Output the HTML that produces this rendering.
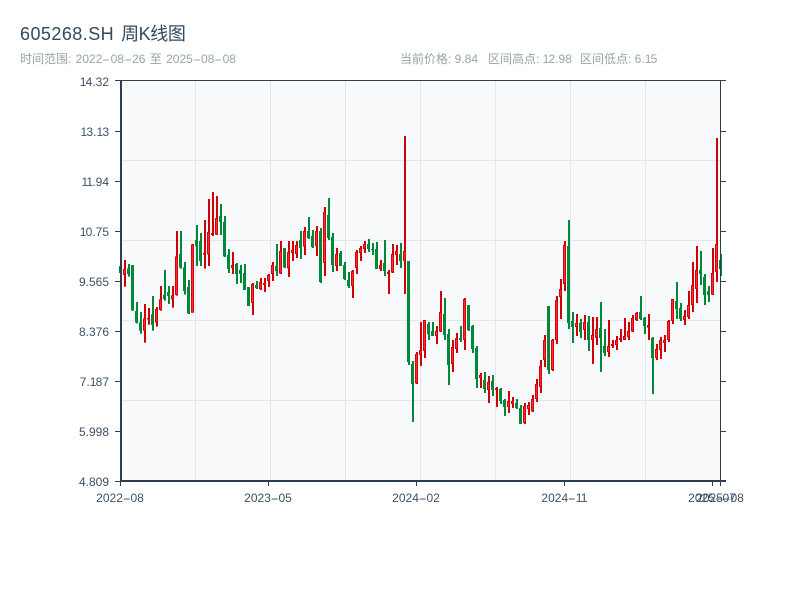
<!DOCTYPE html>
<html lang="zh"><head><meta charset="utf-8"><title>605268.SH 周K线图</title>
<style>
html,body{margin:0;padding:0;background:#fff}
body{width:800px;height:600px;position:relative;overflow:hidden;font-family:"Liberation Sans","Noto Sans CJK SC",sans-serif}
.t{position:absolute;white-space:nowrap}
#title{left:20px;top:22px;font-size:18px;line-height:24px;color:#34495e}
#title b{font-weight:400;letter-spacing:.45px;word-spacing:1.5px}
#title i{font-style:normal;letter-spacing:-.4px}
.s{top:51px;font-size:12px;line-height:16px;color:#95a5a6}
.y{position:absolute;right:691px;font-size:12px;line-height:14px;color:#3d5166;white-space:nowrap}
.x{position:absolute;top:491px;width:60px;text-align:center;font-size:12px;line-height:14px;color:#3d5166;white-space:nowrap}
.d{display:inline-block;width:7.6px;text-align:center;transform:scaleX(2)}
.s .d{width:8.2px}
.n{letter-spacing:-.8px}
svg{position:absolute;left:0;top:0}
</style></head><body>
<div class="t" id="title"><b>605268.SH </b><i>周K线图</i></div>
<div class="t s" style="left:20px;word-spacing:1px">时间范围: 2022<span class="d">-</span>08<span class="d">-</span>26 至 2025<span class="d">-</span>08<span class="d">-</span>08</div>
<div class="t s" style="left:400px">当前价格: 9.84</div>
<div class="t s" style="left:488px">区间高点: <span class="n">1</span>2.98</div>
<div class="t s" style="left:580px">区间低点: 6.<span class="n">1</span>5</div>
<svg width="800" height="600" viewBox="0 0 800 600">
<rect x="121" y="81" width="600" height="400" fill="#f7f9fb"/>
<path d="M195.5 81V481M270.5 81V481M345.5 81V481M420.5 81V481M495.5 81V481M570.5 81V481M645.5 81V481M121 160.5H721M121 240.5H721M121 320.5H721M121 400.5H721" stroke="#e3e6eb" stroke-width="1" fill="none"/>

<g transform="translate(120.67 180) scale(4 .33333)" fill="none" shape-rendering="crispEdges">
<path transform="translate(.0825 0)" stroke="#00873a" stroke-width=".5" d="M0 246V288M2 252V290M3 255V392M4 366V430M5 396V461M8 348V452M11 270V362M12 318V372M15 153V266M16 246V344M17 300V402M19 135V258M20 159V258M25 72V165M26 108V231M27 207V279M29 249V312M30 255V309M31 252V330M32 321V378M34 303V327M39 192V288M41 204V264M45 153V237M47 111V177M48 150V204M50 144V309M52 54V180M53 159V276M55 213V258M56 246V300M57 276V324M62 177V216M63 189V225M64 186V267M66 180V288M70 189V264"/>
<path transform="translate(-.0425 0)" stroke="#00873a" stroke-width=".75" d="M0 258V279M2 265V282M3 255V392M4 393V428M5 427V452M8 403V435M11 345V357M12 336V348M15 222V263M16 262V333M17 321V400M19 180V198M20 183V243M25 108V126M26 126V229M27 225V267M29 252V282M30 270V282M31 279V330M32 321V378M34 315V324M39 258V273M41 204V262M45 180V204M47 153V174M48 168V201M50 153V306M52 105V174M53 171V255M55 219V258M56 255V297M57 300V318M62 192V207M63 207V210M64 207V267M66 249V273M70 222V243"/>
<path transform="translate(.0825 0)" stroke="#d00008" stroke-width=".5" d="M1 240V320M6 372V488M7 384V434M9 381V440M10 318V392M13 318V383M14 153V347M18 192V398M21 120V266M22 57V258M23 36V168M24 48V165M28 216V282M33 309V405M35 294V330M36 294V336M37 282V321M38 246V303M40 183V282M42 183V291M43 183V243M44 183V234M46 141V225M49 138V228M51 81V288M54 204V273M58 270V354M59 210V282M60 198V243M61 183V219M65 240V273M67 270V342M68 192V279M69 195V255M71 -132V342"/>
<path transform="translate(-.0425 0)" stroke="#d00008" stroke-width=".75" d="M1 267V285M6 415V452M7 414V418M9 387V428M10 358V390M13 346V358M14 229V345M18 193V398M21 219V224M22 156V223M23 159V165M24 114V164M28 255V264M33 312V369M35 306V327M36 309V315M37 285V303M38 255V282M40 213V281M42 216V265M43 210V219M44 195V222M46 153V200M49 153V198M51 96V249M54 222V258M58 273V318M59 216V264M60 204V219M61 192V207M65 255V267M67 276V282M68 222V278M69 213V225M71 213V243"/>
<path transform="translate(-.0425 0)" stroke="#ff2a30" stroke-width=".3" d="M1 270V282M6 418V449M9 390V425M10 361V387M13 349V355M14 232V342M18 196V395M22 159V220M24 117V161M28 258V261M33 315V366M35 309V324M37 288V300M38 258V279M40 216V278M42 219V262M43 213V216M44 198V219M46 156V197M49 156V195M51 99V246M54 225V255M58 276V315M59 219V261M60 207V216M61 195V204M65 258V264M68 225V275M69 216V222M71 216V240"/>
</g>

<g transform="translate(120.67 250) scale(4 .33333)" fill="none" shape-rendering="crispEdges">
<path transform="translate(.0825 0)" stroke="#00873a" stroke-width=".5" d="M72 33V345M73 333V516M77 216V270M78 216V258M81 144V270M82 237V405M85 228V276M87 165V243M88 225V309M89 288V414M91 366V429M93 375V438M95 414V462M96 447V498M99 447V477M100 465V522M107 168V372"/>
<path transform="translate(-.0425 0)" stroke="#00873a" stroke-width=".75" d="M72 33V336M73 342V402M77 222V252M78 243V258M81 192V255M82 252V345M85 264V270M87 165V240M88 228V297M89 294V387M91 390V417M93 393V420M95 417V453M96 450V471M99 459V474M100 474V522M107 168V360"/>
<path transform="translate(.0825 0)" stroke="#d00008" stroke-width=".5" d="M74 306V402M75 216V348M76 210V324M79 228V282M80 123V246M83 270V366M84 249V309M86 144V300M90 369V414M92 378V459M94 411V471M97 423V489M98 441V474M101 459V522M102 456V495M103 435V486M104 387V456M105 330V429M106 255V351M108 267V363M109 138V282"/>
<path transform="translate(-.0425 0)" stroke="#d00008" stroke-width=".75" d="M74 312V400M75 300V315M76 210V303M79 243V258M80 186V245M83 291V342M84 264V297M86 147V270M90 375V384M92 396V420M94 414V420M97 453V471M98 453V462M101 468V519M102 465V477M103 447V484M104 402V447M105 348V411M106 270V330M108 270V360M109 150V270"/>
<path transform="translate(-.0425 0)" stroke="#ff2a30" stroke-width=".3" d="M74 315V397M75 303V312M76 213V300M79 246V255M80 189V242M83 294V339M84 267V294M86 150V267M90 378V381M92 399V417M97 456V468M98 456V459M101 471V516M102 468V474M103 450V481M104 405V444M105 351V408M106 273V327M108 273V357M109 153V267"/>
</g>

<g transform="translate(120.67 210) scale(4 .33333)" fill="none" shape-rendering="crispEdges">
<path transform="translate(.0825 0)" stroke="#00873a" stroke-width=".5" d="M112 30V357M113 306V399M115 327V384M117 318V423M120 276V486M121 357V438M130 258V330M131 321V372M133 381V552M139 216V327M140 279V333M145 123V225M146 192V285M147 228V276M150 132V198"/>
<path transform="translate(-.0425 0)" stroke="#00873a" stroke-width=".75" d="M112 108V339M113 333V351M115 339V366M117 336V390M120 354V384M121 408V429M130 306V327M131 324V348M133 384V444M139 273V297M140 294V327M145 180V192M146 201V255M147 243V255M150 150V177"/>
<path transform="translate(.0825 0)" stroke="#d00008" stroke-width=".5" d="M110 207V327M111 93V243M114 312V378M116 315V390M118 321V462M119 321V405M122 330V441M123 390V414M124 378V420M125 357V396M126 324V390M127 336V390M128 315V366M129 306V333M132 312V390M134 402V450M135 381V447M136 375V426M137 330V396M138 267V342M141 300V345M142 243V327M143 156V306M144 108V279M148 114V255M149 -216V216"/>
<path transform="translate(-.0425 0)" stroke="#d00008" stroke-width=".75" d="M110 237V261M111 105V222M114 339V351M116 336V360M118 375V390M119 357V384M122 408V426M123 402V408M124 390V405M125 384V390M126 378V390M127 363V381M128 324V365M129 309V330M132 345V353M134 417V444M135 390V420M136 390V399M137 333V390M138 267V333M141 318V330M142 285V321M143 225V285M144 180V237M148 189V254M149 102V186"/>
<path transform="translate(-.0425 0)" stroke="#ff2a30" stroke-width=".3" d="M110 240V258M111 108V219M114 342V348M116 339V357M118 378V387M119 360V381M122 411V423M124 393V402M126 381V387M127 366V378M128 327V362M129 312V327M134 420V441M135 393V417M136 393V396M137 336V387M138 270V330M141 321V327M142 288V318M143 228V282M144 183V234M148 192V251M149 105V183"/>
</g>

<path d="M115 80.5H726M720.5 81V481" stroke="#2c3e50" stroke-width="1" fill="none"/>
<path d="M121 80V482" stroke="#2c3e50" stroke-width="2" fill="none"/>
<path d="M120 481H726" stroke="#2c3e50" stroke-width="2" fill="none"/>
<path d="M115 131.5H121M115 181.5H121M115 231.5H121M115 281.5H121M115 331.5H121M115 381.5H121M115 431.5H121M115 481.5H121M721 131.5H726M721 181.5H726M721 231.5H726M721 281.5H726M721 331.5H726M721 381.5H726M721 431.5H726M120.5 481V486M268.5 481V486M416.5 481V486M564.5 481V486M712.5 481V486M720.5 481V486" stroke="#2c3e50" stroke-width="1" fill="none"/>
</svg>
<div class="y" style="top:75px"><span class="n">1</span>4.32</div>
<div class="y" style="top:125px"><span class="n">1</span>3.<span class="n">1</span>3</div>
<div class="y" style="top:175px"><span class="n">11</span>.94</div>
<div class="y" style="top:225px"><span class="n">1</span>0.75</div>
<div class="y" style="top:275px">9.565</div>
<div class="y" style="top:325px">8.376</div>
<div class="y" style="top:375px">7.<span class="n">1</span>87</div>
<div class="y" style="top:425px">5.998</div>
<div class="y" style="top:475px">4.809</div>
<div class="x" style="left:90px">2022<span class="d">-</span>08</div>
<div class="x" style="left:238px">2023<span class="d">-</span>05</div>
<div class="x" style="left:386px">2024<span class="d">-</span>02</div>
<div class="x" style="left:534px">2024<span class="d">-</span><span class="n">11</span></div>
<div class="x" style="left:682px">2025<span class="d">-</span>07</div>
<div class="x" style="left:690px">2025<span class="d">-</span>08</div>
</body></html>
